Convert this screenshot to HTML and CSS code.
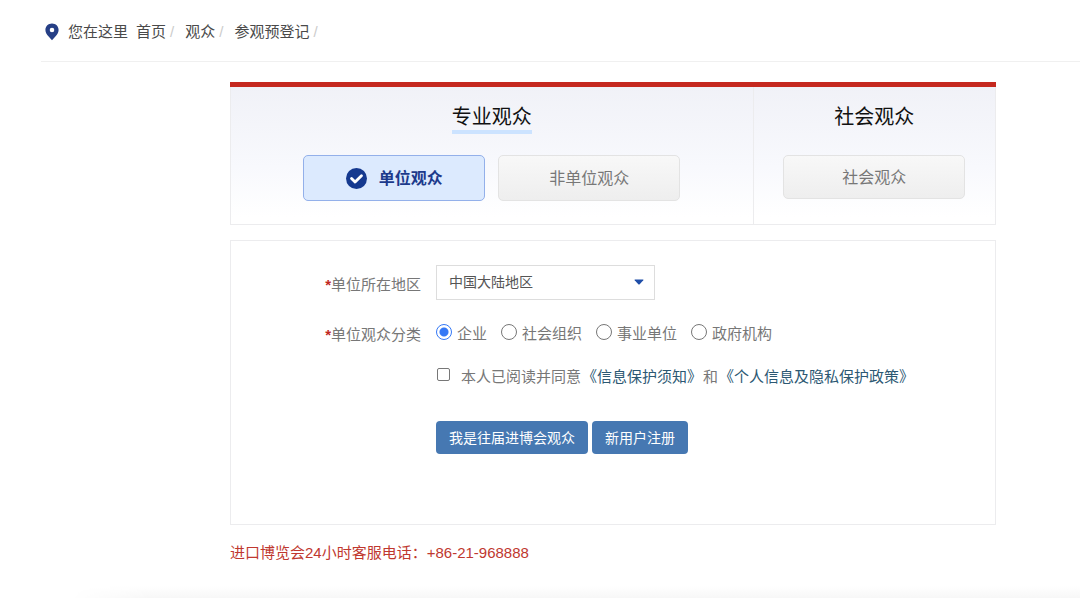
FILE: index.html
```
<!DOCTYPE html>
<html lang="zh-CN">
<head>
<meta charset="utf-8">
<meta name="viewport" content="width=device-width, initial-scale=1">
<title>参观预登记</title>
<link rel="stylesheet" href="styles.css">
</head>
<body>
<nav class="crumbs" aria-label="您在这里">
  <svg class="crumbs-pin" viewBox="0 0 14 18" aria-hidden="true"><path fill-rule="evenodd" d="M7 .5C3.200.5.4 3.300.4 6.900c0 2.500 1.500 4.400 3 6.400L7 17.300l3.600-4c1.500-2 3-3.900 3-6.400C13.600 3.300 10.800.5 7 .5zm0 4.200a2.300 2.300 0 1 1 0 4.600 2.300 2.300 0 0 1 0-4.600z"/></svg>
  <span class="crumbs-label">您在这里</span>
  <ol class="crumbs-list">
    <li><a href="#">首页</a></li>
    <li><a href="#">观众</a></li>
    <li><a href="#">参观预登记</a></li>
  </ol>
</nav>
<main class="content">
  <div class="types">
    <section class="type type-pro">
      <h2 class="type-title is-active">专业观众</h2>
      <div class="type-options">
        <button type="button" class="option option-selected">
          <svg class="option-check" viewBox="0 0 22 22" aria-hidden="true"><circle cx="11" cy="11" r="11"/><path d="M5.800 11l3.700 3.700 6.700-6.500"/></svg>
          <span>单位观众</span>
        </button>
        <button type="button" class="option">非单位观众</button>
      </div>
    </section>
    <section class="type type-public">
      <h2 class="type-title">社会观众</h2>
      <div class="type-options">
        <button type="button" class="option option-short">社会观众</button>
      </div>
    </section>
  </div>
  <form class="form">
    <label class="form-label" for="region"><span class="required">*</span>单位所在地区</label>
    <div class="select-box">
      <select id="region" class="select"><option>中国大陆地区</option></select>
      <svg class="select-arrow" viewBox="0 0 10 6" aria-hidden="true"><path d="M1 .5h8q.8 0 .3.700L5.700 5.200q-.7.700-1.400 0L.7 1.200Q.2.500 1 .5z"/></svg>
    </div>
    <span class="form-label" id="kind-label"><span class="required">*</span>单位观众分类</span>
    <div class="radios" role="radiogroup" aria-labelledby="kind-label">
      <label class="radio"><input type="radio" name="kind" checked><span>企业</span></label>
      <label class="radio"><input type="radio" name="kind"><span>社会组织</span></label>
      <label class="radio"><input type="radio" name="kind"><span>事业单位</span></label>
      <label class="radio"><input type="radio" name="kind"><span>政府机构</span></label>
    </div>
    <div class="agree">
      <input type="checkbox" id="agree">
      <p class="agree-text"><label for="agree">本人已阅读并同意</label><a href="#">《信息保护须知》</a>和<a href="#">《个人信息及隐私保护政策》</a></p>
    </div>
    <div class="actions">
      <button type="button" class="btn">我是往届进博会观众</button>
      <button type="button" class="btn">新用户注册</button>
    </div>
  </form>
  <p class="hotline">进口博览会24小时客服电话：+86-21-968888</p>
</main>
<div class="page-shadow"></div>
</body>
</html>
```
FILE: styles.css
```
* {
  box-sizing: border-box;
}

body {
  display: flex;
  flex-direction: column;
  min-height: 100vh;
  margin: 0;
  background: #fff;
  color: #777;
  font: 15px/20px "Liberation Sans", "Noto Sans CJK SC", sans-serif;
  text-spacing-trim: space-all;
}

button,
select {
  font-family: inherit;
}

/* Breadcrumbs */
.crumbs {
  display: flex;
  align-items: center;
  height: 62px;
  margin-left: 41px;
  padding: 2px 0 0 4px;
  border-bottom: 1px solid #f0f0f0;
  color: #4a4a4a;
}

.crumbs-pin {
  width: 14px;
  height: 18px;
  margin-right: 9px;
  fill: #263f86;
}

.crumbs-list {
  display: flex;
  gap: 11px;
  margin: 0 0 0 8px;
  padding: 0;
  list-style: none;
}

.crumbs-list a {
  color: inherit;
  text-decoration: none;
}

.crumbs-list li::after {
  content: "/";
  margin-left: 4px;
  color: #ccc;
}

/* Main column */
.content {
  flex: 1;
  padding: 20px 84px 0 230px;
}

/* Visitor types */
.types {
  display: grid;
  grid-template-columns: 523fr 243fr;
  border: 1px solid #ececee;
  border-top: 0;
  background: linear-gradient(#f0f1f7, #f8f9fd 60%, #fff 95%);
}

.types::before {
  content: "";
  grid-column: 1 / -1;
  height: 5px;
  margin: 0 -1px;
  background: #c5281f;
}

.type {
  display: flex;
  flex-direction: column;
  align-items: center;
  padding: 17px 0 23px;
}

.type-public {
  border-left: 1px solid #ececee;
}

.type-title {
  margin: 0 0 21px;
  border-bottom: 4px solid transparent;
  color: #111;
  font-size: 20px;
  font-weight: 400;
  line-height: 26px;
}

.type-title.is-active {
  border-color: #cce3ff;
}

.type-options {
  display: flex;
  gap: 13px;
}

.option {
  display: flex;
  align-items: center;
  justify-content: center;
  gap: 12px;
  width: 182px;
  height: 46px;
  padding: 0 0 2px;
  border: 1px solid #e3e3e3;
  border-radius: 5px;
  background: linear-gradient(#f8f8f8, #eee);
  color: #777;
  font-size: 16px;
}

.option-short {
  height: 44px;
}

.option-selected {
  padding: 0;
  border-color: #93b0ea;
  background: #dceafe;
  color: #1c3a8c;
  font-weight: 700;
}

.option-selected span {
  padding-bottom: 2px;
}

.option-check {
  width: 21px;
  height: 21px;
  fill: #15398f;
}

.option-check path {
  fill: none;
  stroke: #fff;
  stroke-width: 3;
  stroke-linecap: round;
  stroke-linejoin: round;
}

/* Registration form */
.form {
  display: grid;
  grid-template-columns: 190px 1fr;
  column-gap: 15px;
  align-items: center;
  margin-top: 15px;
  padding: 24px 0 70px;
  border: 1px solid #ececee;
}

.form-label {
  padding-top: 4px;
  text-align: right;
}

.required {
  color: #c0281f;
  font-weight: 700;
}

.select-box {
  position: relative;
  width: 219px;
}

.select {
  display: block;
  width: 100%;
  height: 35px;
  padding: 0 30px 2px 12px;
  border: 1px solid #ddd;
  border-radius: 0;
  appearance: none;
  background: #fff;
  color: #555;
  font-size: 14px;
}

.select-arrow {
  position: absolute;
  top: 14px;
  right: 11px;
  width: 10px;
  height: 6px;
  fill: #1f4ea8;
  pointer-events: none;
}

.radios {
  display: flex;
  gap: 14px;
  padding: 21px 0 22px;
}

.radio {
  display: flex;
  gap: 5px;
}

.radio span {
  padding-top: 3px;
}

.radio input {
  flex: none;
  width: 16px;
  height: 16px;
  margin: 3px 0 0;
  border: 1px solid #777;
  border-radius: 50%;
  appearance: none;
  background: #fff;
}

.radio input:checked {
  border-color: #3478f6;
  background: radial-gradient(circle, #3478f6 4px, #fff 5px);
}

.agree {
  display: flex;
  grid-column: 2;
  align-items: flex-start;
  gap: 11px;
}

.agree input {
  flex: none;
  width: 13px;
  height: 13px;
  margin: 2px 0 0 1px;
  border: 1px solid #777;
  border-radius: 2px;
  appearance: none;
  background: #fff;
}

.agree input:checked {
  background: #3478f6;
}

.agree-text {
  margin: 0;
  padding-top: 1px;
}

.agree-text a {
  margin: 0 1px;
  color: #2c5873;
  text-decoration: none;
}

.actions {
  display: flex;
  grid-column: 2;
  gap: 4px;
  padding-top: 34px;
}

.btn {
  height: 33px;
  padding: 0 13px 2px;
  border: 0;
  border-radius: 4px;
  background: #4678b2;
  color: #fff;
  font-size: 14px;
}

.hotline {
  margin: 18px 0 0;
  color: #c0382f;
}

/* Soft shade along the bottom edge */
.page-shadow {
  height: 12px;
  margin-left: 70px;
  background: linear-gradient(#fff, #f7f7f7);
  mask-image: linear-gradient(to right, transparent, #000 80px);
}
```
